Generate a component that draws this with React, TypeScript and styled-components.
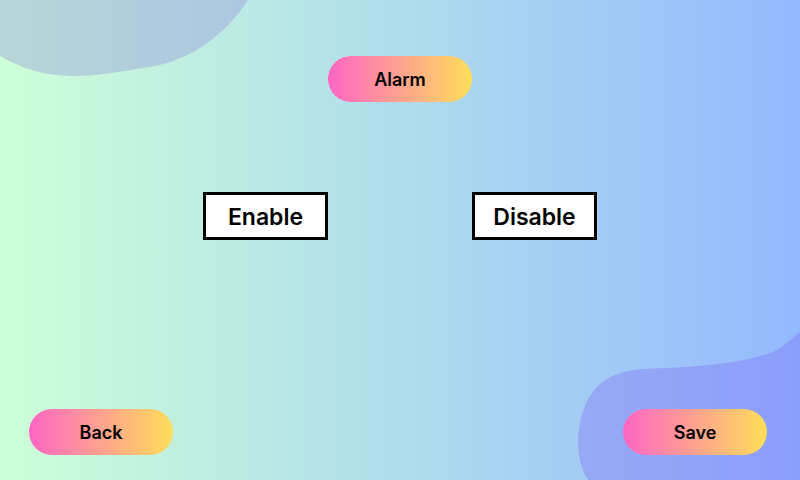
import React from "react";
import styled, { createGlobalStyle, css } from "styled-components";

const GlobalStyle = createGlobalStyle`
  *, *::before, *::after { box-sizing: border-box; }
  body { margin: 0; }
`;

const Screen = styled.div`
  position: relative;
  display: flex;
  flex-direction: column;
  min-height: 100vh;
  padding: 56px 33px 25px 29px;
  overflow: hidden;
  color: #000;
  font-family: Inter, "Noto Sans", sans-serif;
  background: linear-gradient(90deg, #cdffd8, #94b9ff);
`;

const Blob = styled.svg<{ $corner: "top" | "bottom" }>`
  position: absolute;
  ${({ $corner }) =>
    $corner === "top"
      ? "top: 0; left: 0; fill: #8776dc;"
      : "right: 0; bottom: 0; fill: #785ef5;"}
  fill-opacity: 0.3;
  pointer-events: none;
`;

const Header = styled.header`
  position: relative;
  display: flex;
  justify-content: center;
  padding-left: 4px;
`;

const pill = css`
  display: flex;
  align-items: center;
  justify-content: center;
  width: 144px;
  height: 46px;
  padding: 2px 0 0;
  border: 0;
  border-radius: 23px;
  color: inherit;
  font-family: inherit;
  font-size: 18px;
  font-weight: 600;
  line-height: 24px;
  background: linear-gradient(90deg, #ff66c4, #ffde59);
`;

const Title = styled.h1`
  ${pill}
  margin: 0;
`;

const PillButton = styled.button`
  ${pill}
  cursor: pointer;
`;

const Choices = styled.main`
  position: relative;
  display: flex;
  flex: 1;
  align-items: flex-start;
  justify-content: center;
  gap: 144px;
  padding: 90px 0 24px 4px;
`;

const ChoiceButton = styled.button`
  width: 125px;
  height: 48px;
  padding: 2px 0 0;
  border: 3px solid #000;
  color: inherit;
  font-family: inherit;
  font-size: 23px;
  font-weight: 600;
  line-height: 32px;
  background: #fff;
  cursor: pointer;
`;

const Footer = styled.footer`
  position: relative;
  display: flex;
  justify-content: space-between;
`;

export default function App() {
  return (
    <>
      <GlobalStyle />
      <Screen>
        <Blob $corner="top" width="248" height="76" viewBox="0 0 248 76" aria-hidden="true">
          <path d="M0 0H248C226 34 192 60 150 67C112 73 95 76 71 76C43 75 20 68 0 56Z" />
        </Blob>
        <Blob $corner="bottom" width="222" height="148" viewBox="0 0 222 148" aria-hidden="true">
          <path d="M222 0V148H10C4 138 0 126 0 110C0 93 4 77 12 64C23 47 39 39 65 37C112 35 160 33 195 20C206 15 213 7 222 0Z" />
        </Blob>
        <Header>
          <Title>Alarm</Title>
        </Header>
        <Choices>
          <ChoiceButton type="button">Enable</ChoiceButton>
          <ChoiceButton type="button">Disable</ChoiceButton>
        </Choices>
        <Footer>
          <PillButton type="button">Back</PillButton>
          <PillButton type="button">Save</PillButton>
        </Footer>
      </Screen>
    </>
  );
}
